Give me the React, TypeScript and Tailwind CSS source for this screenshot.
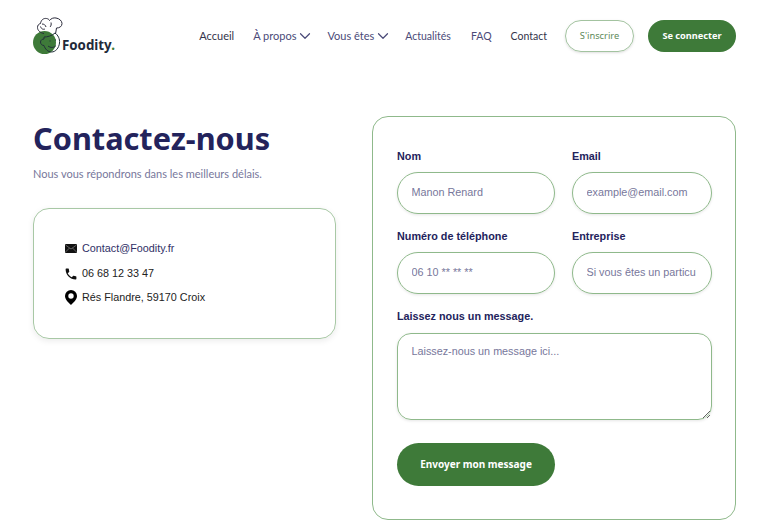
import { ChevronDown } from "lucide-react";

const ui = "font-['Noto_Sans','Open_Sans',sans-serif]";
const lato = "font-['Lato','Noto_Sans',sans-serif]";
const arial = "font-['Liberation_Sans',Arial,sans-serif]";

function Logo() {
  return (
    <div className="flex items-end">
      <svg width="32" height="38" viewBox="0 0 32 38" fill="none" className="block">
        <circle cx="11.500" cy="25.500" r="11.500" fill="#3e7a39" />
        <path
          d="M11 16.500C7.500 16 4.500 13.500 4.500 10.500c0-2 1-3.500 3-4C8 3 10.500 1 13.500 1.500c1.500.2 2.500 1 3 2C18 1.500 20.500.5 23 1c3.500.5 6 3 6 5.500 0 3-2.500 4.500-5.500 4.500l-1 6"
          stroke="#2a2a3a"
          strokeWidth="1"
        />
        <path d="M9 7c2 0 3.500 1 4 3M7.500 9.500c1 3 3 3 4.500 2.500M18 5.500c.5 2 0 3.500-1 4.500" stroke="#2a2a3a" strokeWidth="1" />
        <path
          d="M11 20c3 0 8-1 11-4 3 2 5 6 4.500 10-.5 5-4 9-8 9-3.500 0-6.500-3-7.500-6.500-2 0-3.500-1.500-3.500-3.500s2-3 3.500-3z"
          stroke="#22303a"
          strokeWidth="1"
        />
        <path d="M15 29c2.500 2 6 2 8-.5M16.500 24h1M22 23h1" stroke="#22303a" strokeWidth="1" />
      </svg>
      <span className={`${ui} ml-[-3px] mb-[3px] text-[13.300px] font-bold leading-none text-[#222a3a]`}>
        Foodity<span className="text-[#3e7a39]">.</span>
      </span>
    </div>
  );
}

function Nav() {
  return (
    <header className={`${lato} flex h-[72px] items-center justify-between pl-[33px] pr-[32px]`}>
      <Logo />
      <nav className="flex items-center text-[11px] leading-[16px] text-[#4a4a78]">
        <a className="text-[#33334a]">Accueil</a>
        <a className="ml-[19px] flex items-center">
          À propos <ChevronDown size={18} strokeWidth={1.600} />
        </a>
        <a className="ml-[13px] flex items-center">
          Vous êtes <ChevronDown size={18} strokeWidth={1.600} />
        </a>
        <a className="ml-[13px] text-[10.500px] leading-[16px]">Actualités</a>
        <a className="ml-[20px] text-[10.500px] leading-[16px]">FAQ</a>
        <a className="ml-[19px] text-[10.500px] leading-[16px] text-[#33334a]">Contact</a>
        <a className={`${ui} ml-[18px] flex h-[32px] w-[69px] items-center justify-center rounded-full border border-[#a3c3a0] text-[9.300px] text-[#5d8a59] shadow-sm`}>
          S'inscrire
        </a>
        <a className={`${ui} ml-[14px] flex h-[32px] w-[88px] items-center justify-center rounded-full bg-[#3e7a39] text-[9.200px] font-bold text-white`}>
          Se connecter
        </a>
      </nav>
    </header>
  );
}

function ContactCard() {
  return (
    <div className={`${arial} mt-[26px] flex h-[131px] w-[303px] flex-col justify-center gap-[10px] rounded-[16px] border border-[#a8c8a5] pb-[1px] pl-[31px] text-[10.800px] text-[#222] shadow-[0_2px_6px_rgba(0,0,0,0.08)]`}>
      <div className="flex h-[15px] items-center gap-[5px]">
        <svg width="12" height="9" viewBox="0 0 12 9" className="block">
          <rect width="12" height="9" rx="1" fill="#111" />
          <path d="M.5 1l5.500 4 5.500-4M.5 8l4-4M11.500 8l-4-4" stroke="#999" strokeWidth=".6" fill="none" />
        </svg>
        <span className="text-[#2f2f66]">Contact@Foodity.fr</span>
      </div>
      <div className="flex h-[15px] items-center gap-[5px]">
        <svg width="12" height="12" viewBox="2 2 20 20" fill="#111" className="block">
          <path d="M6.600 10.800c1.400 2.800 3.800 5.100 6.600 6.600l2.200-2.200c.3-.3.700-.4 1-.2 1.100.4 2.300.6 3.600.6.600 0 1 .4 1 1V20c0 .6-.4 1-1 1C10.600 21 3 13.400 3 4c0-.6.400-1 1-1h3.500c.6 0 1 .4 1 1 0 1.300.2 2.500.6 3.600.1.300 0 .7-.2 1l-2.300 2.200z" />
        </svg>
        <span>06 68 12 33 47</span>
      </div>
      <div className="mt-[-1px] flex h-[15px] items-center gap-[5px]">
        <svg width="12" height="15" viewBox="0 0 12 15" className="block">
          <path
            fillRule="evenodd"
            d="M6 0a6 6 0 0 1 6 6c0 3.500-3.500 6.500-6 9-2.500-2.500-6-5.500-6-9a6 6 0 0 1 6-6zm0 3.300a2.700 2.700 0 1 0 0 5.400 2.700 2.700 0 0 0 0-5.400z"
            fill="#000"
          />
        </svg>
        <span>Rés Flandre, 59170 Croix</span>
      </div>
    </div>
  );
}

function Field({ label, placeholder }: { label: string; placeholder: string }) {
  return (
    <label className="block min-w-0">
      <span className="block h-[16px] text-[10.800px] font-bold leading-[16px] text-[#23235c]">{label}</span>
      <input
        placeholder={placeholder}
        className="mt-[8px] h-[42px] w-full rounded-full border border-[#8fb98b] pb-[2px] pl-[13.500px] pr-[15px] text-[10.800px] text-[#222] shadow-[0_1px_3px_rgba(0,0,0,0.1)] outline-none placeholder:text-[#77779b]"
      />
    </label>
  );
}

function ContactForm() {
  return (
    <form className={`${arial} h-[404px] w-[364px] rounded-[16px] border border-[#8fb98b] pl-[24px] pt-[31px]`}>
      <div className="grid w-[315px] grid-cols-[158px_140px] gap-x-[17px] gap-y-[14px]">
        <Field label="Nom" placeholder="Manon Renard" />
        <Field label="Email" placeholder="example@email.com" />
        <Field label="Numéro de téléphone" placeholder="06 10 ** ** **" />
        <Field label="Entreprise" placeholder="Si vous êtes un particulier, laissez vide" />
      </div>
      <label className="mt-[14px] block w-[315px]">
        <span className="block h-[16px] text-[10.800px] font-bold leading-[16px] text-[#23235c]">Laissez nous un message.</span>
        <textarea
          placeholder="Laissez-nous un message ici..."
          className="mt-[9px] block h-[87px] w-full rounded-[14px] border border-[#8fb98b] px-[13.500px] py-[9px] text-[10.800px] leading-[16px] shadow-[0_1px_3px_rgba(0,0,0,0.1)] outline-none placeholder:text-[#77779b]"
        />
      </label>
      <button
        type="button"
        className={`${ui} mt-[23px] h-[43px] w-[158px] rounded-full bg-[#3e7a39] text-[10px] font-bold text-white`}
      >
        Envoyer mon message
      </button>
    </form>
  );
}

export default function App() {
  return (
    <main className="h-[524px] w-[768px] overflow-hidden bg-white">
      <Nav />
      <div className="flex items-start pl-[33px] pt-[44px]">
        <div className="w-[339px]">
          <h1 className={`${ui} text-[30.700px] font-bold leading-[44px] text-[#23235c]`}>Contactez-nous</h1>
          <p className={`${lato} mt-[6px] text-[11px] leading-[16px] text-[#77779b]`}>
            Nous vous répondrons dans les meilleurs délais.
          </p>
          <ContactCard />
        </div>
        <ContactForm />
      </div>
    </main>
  );
}
